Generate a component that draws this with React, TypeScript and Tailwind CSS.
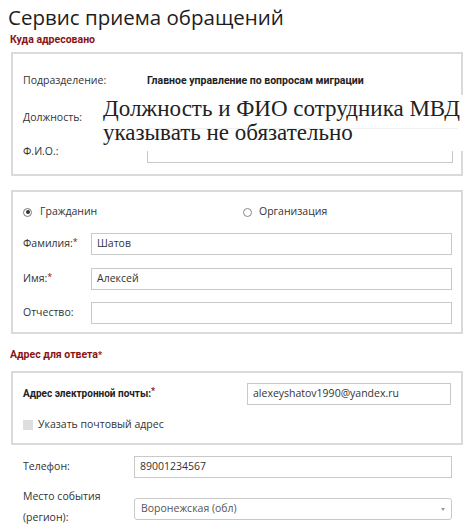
import React from "react";

const Input = ({ value, className = "" }: { value?: string; className?: string }) => (
  <div
    className={`h-[22px] border border-[#c9c9c9] bg-white flex items-center px-[5px] text-[10.5px] text-[#333] ${className}`}
  >
    {value}
  </div>
);

const Star = () => <span className="text-[#8a1414] text-[9px] align-top relative top-[-1px]">*</span>;

const boldFont = { fontFamily: 'Roboto, "Open Sans", sans-serif' };

export default function App() {
  return (
    <div
      className="relative w-[474px] h-[532px] bg-white overflow-hidden text-[#333]"
      style={{ fontFamily: '"Open Sans", "Noto Sans", sans-serif' }}
    >
      <div className="pl-[8px] h-[34px] flex items-center text-[20.5px] leading-none text-[#1d1d1d]">
        Сервис приема обращений
      </div>
      <div
        className="pl-[10px] h-[12px] flex items-center text-[10.5px] font-bold text-[#8a1414]"
        style={boldFont}
      >
        Куда адресовано
      </div>

      {/* Box 1 */}
      <div className="ml-[11px] mt-[6px] w-[452px] h-[124px] border-2 border-[#dadada] pl-[10px] pr-[8px] pt-[14px]">
        <div className="flex items-center h-[26px]">
          <div className="w-[124px] text-[10.5px]">Подразделение:</div>
          <div className="text-[10.5px] font-bold text-[#222]" style={boldFont}>
            Главное управление по вопросам миграции
          </div>
        </div>
        <div className="flex items-center h-[26px] mt-[11px]">
          <div className="w-[124px] text-[10.5px]">Должность:</div>
          <Input className="flex-1" />
        </div>
        <div className="flex items-center h-[22px] mt-[10px]">
          <div className="w-[124px] text-[10.5px]">Ф.И.О.:</div>
          <Input className="flex-1" />
        </div>
      </div>

      {/* Box 2 */}
      <div className="ml-[11px] mt-[14px] w-[452px] h-[144px] border-2 border-[#dadada] pl-[10px] pr-[9px] pt-[12px]">
        <div className="flex items-center h-[16px] text-[10.5px]">
          <div className="flex items-center w-[220px]">
            <span className="w-[9px] h-[9px] rounded-full border border-[#777] flex items-center justify-center mr-[8px]">
              <span className="w-[4px] h-[4px] rounded-full bg-[#333]" />
            </span>
            Гражданин
          </div>
          <div className="flex items-center">
            <span className="w-[9px] h-[9px] rounded-full border border-[#888] mr-[7px]" />
            Организация
          </div>
        </div>
        <div className="flex items-center h-[22px] mt-[13px]">
          <div className="w-[68px] text-[10.5px]">
            Фамилия:<Star />
          </div>
          <Input className="flex-1" value="Шатов" />
        </div>
        <div className="flex items-center h-[22px] mt-[13px]">
          <div className="w-[68px] text-[10.5px]">
            Имя:<Star />
          </div>
          <Input className="flex-1" value="Алексей" />
        </div>
        <div className="flex items-center h-[22px] mt-[12px]">
          <div className="w-[68px] text-[10.5px]">Отчество:</div>
          <Input className="flex-1" />
        </div>
      </div>

      <div
        className="pl-[10px] mt-[15px] h-[12px] flex items-center text-[10.5px] font-bold text-[#8a1414]"
        style={boldFont}
      >
        Адрес для ответа<span className="text-[9px] self-start">*</span>
      </div>

      {/* Box 3 */}
      <div className="ml-[11px] mt-[10px] w-[452px] h-[74px] border-2 border-[#dadada] pl-[10px] pr-[10px] pt-[10px]">
        <div className="flex items-center h-[21px]">
          <div className="w-[224px] text-[10px] font-bold text-[#222]" style={boldFont}>
            Адрес электронной почты:<Star />
          </div>
          <Input className="flex-1 h-[21px]" value="alexeyshatov1990@yandex.ru" />
        </div>
        <div className="flex items-center h-[12px] mt-[15px] text-[10.5px]">
          <span className="w-[10px] h-[10px] bg-[#dedede] mr-[5px]" />
          Указать почтовый адрес
        </div>
      </div>

      <div className="flex items-center h-[22px] mt-[11px] pl-[23px] pr-[22px]">
        <div className="w-[111px] text-[10.5px]">Телефон:</div>
        <Input className="flex-1 h-[21px]" value="89001234567" />
      </div>
      <div className="flex items-center mt-[8px] pl-[23px] pr-[22px]">
        <div className="w-[111px] text-[10.5px] leading-[21px]">
          Место события
          <br />
          (регион):
        </div>
        <div className="flex-1 h-[22px] border border-[#c9c9c9] rounded-[3px] flex items-center justify-between pl-[6px] pr-[6px] text-[10.5px] text-[#555] mt-[4px]">
          Воронежская (обл)
          <span className="w-0 h-0 border-l-[2.5px] border-r-[2.5px] border-t-[3px] border-l-transparent border-r-transparent border-t-[#999]" />
        </div>
      </div>

      {/* Overlay annotation */}
      <div
        className="absolute left-[100px] top-[95px] w-[374px] h-[56px] bg-white pl-[3px] text-[23px] leading-[24px] text-[#222] whitespace-nowrap"
        style={{ fontFamily: '"Liberation Serif", "DejaVu Serif", serif' }}
      >
        <div className="absolute left-[48px] right-[16px] top-[33px] h-px bg-[#f0f0f0]" />
        <div className="relative pt-[2px]">
          Должность и ФИО сотрудника МВД
          <br />
          указывать не обязательно
        </div>
      </div>
    </div>
  );
}
